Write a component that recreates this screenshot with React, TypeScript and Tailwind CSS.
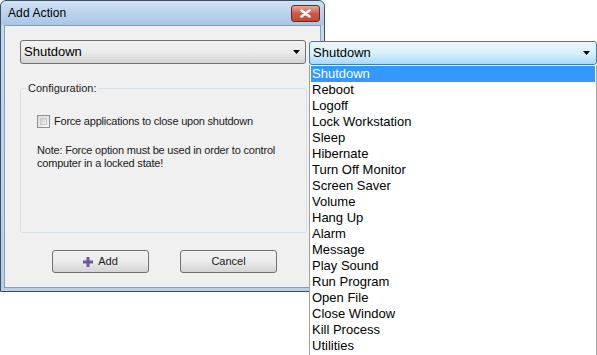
import React from "react";

const items = [
  "Shutdown",
  "Reboot",
  "Logoff",
  "Lock Workstation",
  "Sleep",
  "Hibernate",
  "Turn Off Monitor",
  "Screen Saver",
  "Volume",
  "Hang Up",
  "Alarm",
  "Message",
  "Play Sound",
  "Run Program",
  "Open File",
  "Close Window",
  "Kill Process",
  "Utilities",
];

function Arrow() {
  return (
    <svg width="7" height="4" viewBox="0 0 7 4">
      <path d="M0 0h7L3.5 4z" fill="#000" />
    </svg>
  );
}

export default function App() {
  return (
    <div
      className="relative w-[597px] h-[355px] bg-white overflow-hidden"
      style={{ fontFamily: '"Liberation Sans", Arial, sans-serif' }}
    >
      {/* Window */}
      <div className="w-[325px] h-[292px] rounded-t-[6px] border border-[#3d4e63] bg-gradient-to-b from-[#c3d9f0] to-[#b7cfe9] flex flex-col">
        <div className="h-[24px] flex items-center justify-between pl-[7px] pr-[4px] bg-gradient-to-b from-[#cfe1f4] to-[#a9c6e7] rounded-t-[6px]">
          <span className="text-[12px] text-black tracking-[0.1px]">Add Action</span>
          <div className="w-[29px] h-[17px] mt-[1px] rounded-[3px] border border-[#6e2a22] bg-gradient-to-b from-[#e5a89a] via-[#cf5943] to-[#c24a30] flex items-center justify-center">
            <svg width="11" height="9" viewBox="0 0 11 9">
              <path d="M1.5 1.5l8 6M9.5 1.5l-8 6" stroke="#fff" strokeWidth="2.6" strokeLinecap="round" />
            </svg>
          </div>
        </div>
        <div className="flex-1 mx-[3px] mb-[3px] border border-[#8aa0b8] bg-[#f0f0f0] flex flex-col px-[15px] pt-[14px]">
          {/* left combo */}
          <div className="w-[286px] h-[24px] rounded-[3px] border border-[#707070] bg-gradient-to-b from-[#f2f2f2] via-[#ebebeb] to-[#d4d4d4] flex items-center justify-between pl-[3px] pr-[5px]">
            <span className="text-[13px] text-black">Shutdown</span>
            <Arrow />
          </div>
          {/* group box */}
          <div className="relative mt-[24px] w-[287px] h-[145px] rounded-[3px] border border-[#d5dfe5] px-[16px]">
            <span className="absolute -top-[7px] left-[5px] px-[2px] bg-[#f0f0f0] text-[11px] text-[#222] leading-[13px]">
              Configuration:
            </span>
            <div className="mt-[24px] flex items-center gap-[4px]">
              <div className="w-[13px] h-[13px] border border-[#8e8f8f] bg-gradient-to-br from-[#dcdcdc] to-[#f6f6f6] p-[2px]">
                <div className="w-full h-full border border-[#c8c8c8] bg-gradient-to-br from-[#cfcfcf] to-[#f3f3f3]" />
              </div>
              <span className="text-[11px] text-[#1a1a1a] tracking-[-0.22px]">Force applications to close upon shutdown</span>
            </div>
            <p className="mt-[14px] text-[11px] leading-[13px] text-[#1a1a1a] tracking-[-0.2px]">
              Note: Force option must be used in order to control
              <br />
              computer in a locked state!
            </p>
          </div>
          {/* buttons */}
          <div className="mt-[17px] flex gap-[31px] pl-[32px]">
            <div className="w-[97px] h-[23px] rounded-[3px] border border-[#707070] bg-gradient-to-b from-[#f2f2f2] via-[#ebebeb] to-[#d4d4d4] flex items-center justify-center gap-[5px]">
              <svg width="10" height="10" viewBox="0 0 10 10">
                <path d="M3.5 0h3v3.5H10v3H6.5V10h-3V6.5H0v-3h3.5z" fill="#6a5a9a" />
              </svg>
              <span className="text-[11px] text-[#1a1a1a]">Add</span>
            </div>
            <div className="w-[97px] h-[23px] rounded-[3px] border border-[#707070] bg-gradient-to-b from-[#f2f2f2] via-[#ebebeb] to-[#d4d4d4] flex items-center justify-center">
              <span className="text-[11px] text-[#1a1a1a]">Cancel</span>
            </div>
          </div>
        </div>
      </div>

      {/* Right combo + dropdown (popup overlay) */}
      <div className="absolute left-[309px] top-[41px] w-[288px]">
        <div className="h-[24px] rounded-[3px] border border-[#3c7fb1] bg-gradient-to-b from-[#eaf6fd] via-[#d9f0fc] to-[#a7d9f5] flex items-center justify-between pl-[3px] pr-[6px]">
          <span className="text-[13px] text-black">Shutdown</span>
          <Arrow />
        </div>
        <div className="w-[288px] h-[291px] border border-[#a0a0a0] border-t-0 bg-white px-[1px] pt-[1px]">
          {items.map((it, i) => (
            <div
              key={it}
              className={
                "h-[16px] leading-[16px] text-[13px] pl-[1px] " +
                (i === 0 ? "bg-[#3399ff] text-white" : "text-black")
              }
            >
              {it}
            </div>
          ))}
        </div>
      </div>
    </div>
  );
}
